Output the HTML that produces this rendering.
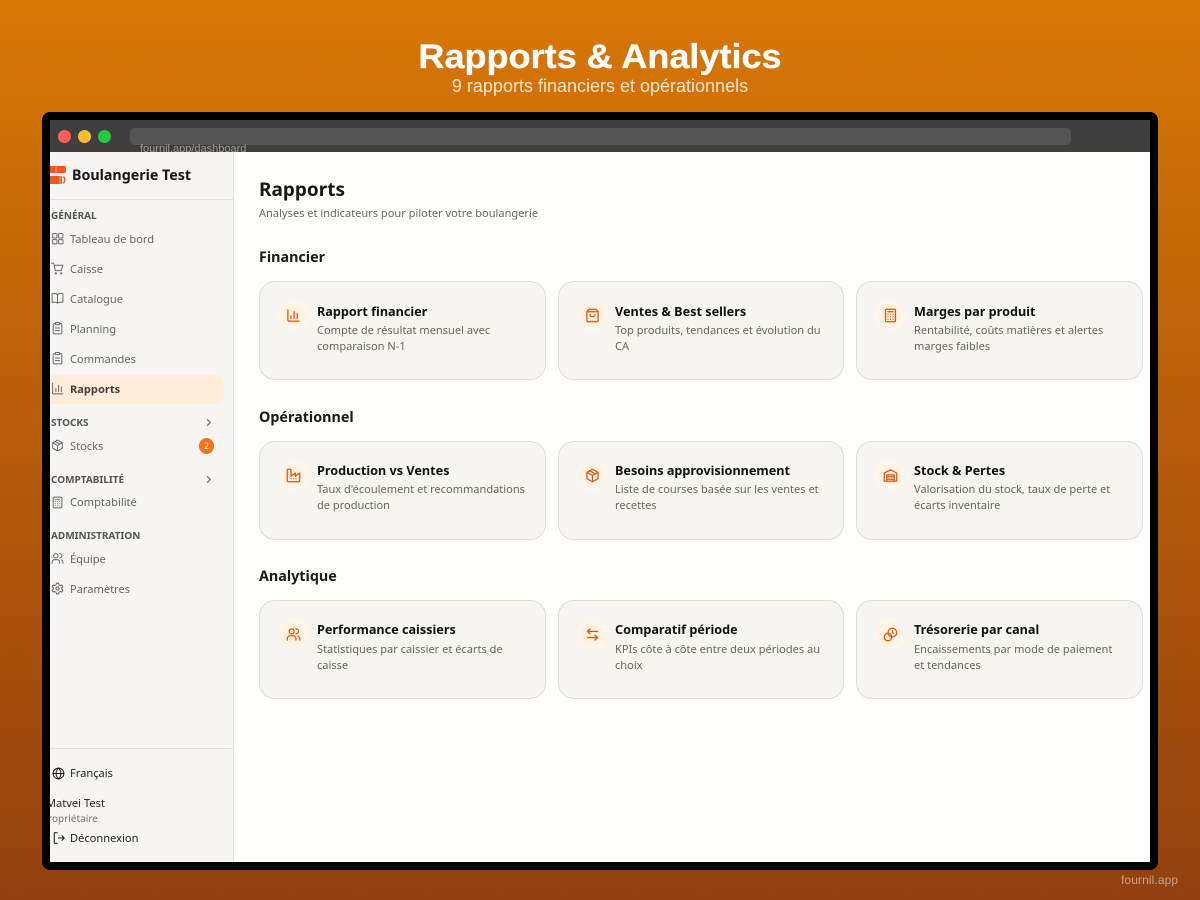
<!DOCTYPE html>
<html lang="fr"><head><meta charset="utf-8"><title>Rapports</title>
<style>
*{box-sizing:border-box;margin:0;padding:0}
html,body{width:1200px;height:900px;overflow:hidden}
body{position:relative;background:linear-gradient(180deg,#d97706,#92400e);font-family:"Noto Sans","Noto Sans CJK SC","Liberation Sans",sans-serif;color:#111}
.a{position:absolute;white-space:nowrap}
.h1{left:0;width:1200px;top:36px;text-align:center;font:700 34px/42px "Liberation Sans",sans-serif;transform:scaleX(1.06);-webkit-text-stroke:.3px #fff;color:#fff}
.h2{left:0;width:1200px;top:74px;text-align:center;font:400 18px/24px "Liberation Sans",sans-serif;color:rgba(255,255,255,.82)}
.wm{left:1121px;top:872px;font:400 12px/16px "Liberation Sans",sans-serif;letter-spacing:.1px;color:rgba(255,255,255,.5)}
.frame{left:42px;top:112px;width:1116px;height:758px;background:#000;border-radius:8px}
.bar{left:50px;top:120px;width:1100px;height:32px;background:#3f3f3f;overflow:hidden}
.dot{position:absolute;width:13px;height:13px;border-radius:50%;top:10px}
.url{left:130px;top:128px;width:941px;height:17px;background:#555;border-radius:5px}
.urlt{left:140px;top:142px;font:400 11px/14px "Liberation Sans",sans-serif;color:#9a9a9a;height:10px;overflow:hidden}
.app{left:50px;top:152px;width:1100px;height:710px;background:#fefefc;overflow:hidden}
.side{position:absolute;left:0;top:0;width:184px;height:710px;background:#f6f5f3;border-right:1px solid #e2e1dd}
.hr{position:absolute;left:0;width:183px;height:1px;background:#e2e1dd}
.brand{left:22px;top:14px;font-size:14.25px;font-weight:700;line-height:20px;color:#171717}
.sec{left:1px;font-size:10px;font-weight:700;line-height:14px;color:#57534e}
.nav{left:20px;font-size:11.1px;line-height:16px;color:#6b6560}
.ni{position:absolute;left:1px;width:13px;height:13px;fill:none;stroke:#6b6560;stroke-width:1.8;stroke-linecap:round;stroke-linejoin:round}
.act{position:absolute;left:-10px;top:223px;width:184px;height:29px;background:#ffedd9;border-radius:10px}
.ch{position:absolute;left:154px;width:9px;height:9px;fill:none;stroke:#78716c;stroke-width:1.4}
.badge{left:149px;top:286px;width:15px;height:16px;border-radius:50%;background:#f97316;color:#fff;font-size:9px;line-height:16px;text-align:center}
.t1{left:209px;top:24px;font-size:19px;font-weight:700;line-height:26px;color:#171717}
.t2{left:209px;top:54px;font-size:11.05px;line-height:16px;color:#6b6560}
.s{left:209px;font-size:14.35px;font-weight:700;line-height:20px;color:#1c1917}
.card{position:absolute;width:287px;height:99px;background:#f6f5f2;border:1px solid #dddcd7;border-radius:16px}
.ic{position:absolute;left:17px;top:17px;width:32px;height:32px;border-radius:50%;background:radial-gradient(circle,#ffedd5 0,#fff5ea 60%,rgba(255,247,237,0) 100%)}
.ic svg{position:absolute;left:8.500px;top:8.500px;width:15px;height:15px;fill:none;stroke:#dc5510;stroke-width:2;stroke-linecap:round;stroke-linejoin:round}
.ct{position:absolute;left:57px;top:19px;font-size:12.65px;font-weight:700;line-height:20px;color:#111;white-space:nowrap}
.cd{position:absolute;left:57px;top:41px;width:210px;font-size:11.05px;line-height:16px;color:#6b6560;white-space:normal}
.c2 .ct,.c2 .cd{left:56px}
.r2 .ct{top:18px}.r2 .cd{top:40px}
.r3 .ct{top:18px}
</style></head><body>
<div class="a h1">Rapports &amp; Analytics</div>
<div class="a h2">9 rapports financiers et opérationnels</div>
<div class="a wm">fournil.app</div>
<div class="a frame"></div>
<div class="a bar">
<span class="dot" style="left:8px;background:#ff5f57"></span>
<span class="dot" style="left:28px;background:#febc2e"></span>
<span class="dot" style="left:48px;background:#28c840"></span>
</div>
<div class="a url"></div>
<div class="a urlt">fournil.app/dashboard</div>
<div class="a app">
<div class="side">
<svg style="position:absolute;left:0;top:14px" width="17" height="19" viewBox="0 0 17 19"><rect x="-3" y="0" width="19" height="7" rx="1.500" fill="#ea5a20"/><rect x="-3" y="10" width="15" height="8" rx="1.500" fill="#ea5a20"/><path d="M6 0v7M10 10v8" stroke="#f6a47f" stroke-width="1"/><path d="M13.500 10.500q2.500 3 0 7" fill="none" stroke="#ea5a20" stroke-width="1.500"/></svg>
<div class="a brand">Boulangerie Test</div>
<div class="hr" style="top:47px"></div>
<div class="a sec" style="top:56px">GÉNÉRAL</div>
<div class="act"></div>
<svg class="ni" style="top:80px" viewBox="0 0 24 24"><rect x="3" y="3" width="8" height="8" rx="1"/><rect x="14" y="3" width="8" height="8" rx="1"/><rect x="3" y="14" width="8" height="8" rx="1"/><rect x="14" y="14" width="8" height="8" rx="1"/></svg>
<div class="a nav" style="top:80px">Tableau de bord</div>
<svg class="ni" style="top:110px" viewBox="0 0 24 24"><path d="M1 2h4l3 14h11l3-10H6"/><circle cx="9" cy="21" r="1.200"/><circle cx="19" cy="21" r="1.200"/></svg>
<div class="a nav" style="top:110px">Caisse</div>
<svg class="ni" style="top:140px" viewBox="0 0 24 24"><path d="M12 6v15M12 6a4 4 0 0 0-4-3H2v16h7a3 3 0 0 1 3 2 3 3 0 0 1 3-2h7V3h-6a4 4 0 0 0-4 3z"/></svg>
<div class="a nav" style="top:140px">Catalogue</div>
<svg class="ni" style="top:170px" viewBox="0 0 24 24"><rect x="8" y="1" width="8" height="4" rx="1"/><path d="M16 3h2a2 2 0 0 1 2 2v15a2 2 0 0 1-2 2H6a2 2 0 0 1-2-2V5a2 2 0 0 1 2-2h2M8 11h8M8 16h8"/></svg>
<div class="a nav" style="top:170px">Planning</div>
<svg class="ni" style="top:200px" viewBox="0 0 24 24"><rect x="8" y="1" width="8" height="4" rx="1"/><path d="M16 3h2a2 2 0 0 1 2 2v15a2 2 0 0 1-2 2H6a2 2 0 0 1-2-2V5a2 2 0 0 1 2-2h2M8 11h8M8 16h8"/></svg>
<div class="a nav" style="top:200px">Commandes</div>
<svg class="ni" style="top:230px" viewBox="0 0 24 24"><path d="M3 2v18a2 2 0 0 0 2 2h17M9 18v-6M14 18V6M19 18v-9"/></svg>
<div class="a nav" style="top:230px;font-weight:700;color:#44403c">Rapports</div>
<div class="a sec" style="top:263px">STOCKS</div>
<svg class="ch" style="top:266px" viewBox="0 0 10 10"><path d="M3.500 1.500 7 5l-3.500 3.500"/></svg>
<svg class="ni" style="top:287px" viewBox="0 0 24 24"><path d="M12 2 3 7v10l9 5 9-5V7zM3 7l9 5 9-5M12 12v10M7.500 4.500l9 5"/></svg>
<div class="a nav" style="top:287px">Stocks</div>
<div class="a badge">2</div>
<div class="a sec" style="top:320px">COMPTABILITÉ</div>
<svg class="ch" style="top:323px" viewBox="0 0 10 10"><path d="M3.500 1.500 7 5l-3.500 3.500"/></svg>
<svg class="ni" style="top:344px" viewBox="0 0 24 24"><rect x="4" y="2" width="16" height="20" rx="2"/><path d="M8 6h8M8 10h.01M12 10h.01M16 10h.01M8 14h.01M12 14h.01M16 14h.01M8 18h.01M12 18h.01M16 18h.01"/></svg>
<div class="a nav" style="top:343px">Comptabilité</div>
<div class="a sec" style="top:376px">ADMINISTRATION</div>
<svg class="ni" style="top:400px" viewBox="0 0 24 24"><circle cx="9" cy="7" r="4"/><path d="M2 21v-2a5 5 0 0 1 5-5h4a5 5 0 0 1 5 5v2M16 3a4 4 0 0 1 0 8M22 21v-2a5 5 0 0 0-3-4.500"/></svg>
<div class="a nav" style="top:400px">Équipe</div>
<svg class="ni" style="top:430px" viewBox="0 0 24 24"><circle cx="12" cy="12" r="3"/><path d="M10 2h4l.6 3 2.600 1.500 2.900-1 2 3.400-2.300 2v2.200l2.300 2-2 3.400-2.900-1-2.600 1.500L14 22h-4l-.6-3-2.600-1.500-2.900 1-2-3.400 2.300-2v-2.200l-2.300-2 2-3.400 2.900 1L9.400 5z"/></svg>
<div class="a nav" style="top:430px">Paramètres</div>
<div class="hr" style="top:596px"></div>
<svg class="ni" style="top:615px;left:2px;stroke:#1c1917;width:13px;height:13px" viewBox="0 0 24 24"><circle cx="12" cy="12" r="10"/><path d="M2 12h20M12 2c-6 6-6 14 0 20M12 2c6 6 6 14 0 20"/></svg>
<div class="a nav" style="top:614px;color:#292524">Français</div>
<div class="a nav" style="top:644px;left:-4px;color:#292524">Matvei Test</div>
<div class="a" style="top:659px;left:-8px;font-size:10px;line-height:14px;color:#78716c">Propriétaire</div>
<svg class="ni" style="top:679px;left:2px;stroke:#1c1917;width:14px;height:14px" viewBox="0 0 24 24"><path d="M9 3H4v18h5M11 12h10M17 8l4 4-4 4"/></svg>
<div class="a nav" style="top:679px;color:#292524">Déconnexion</div>
</div>

<div class="a t1">Rapports</div>
<div class="a t2">Analyses et indicateurs pour piloter votre boulangerie</div>

<div class="a s" style="top:96px">Financier</div>
<div class="card" style="left:209px;top:129px"><div class="ic"><svg viewBox="0 0 24 24"><path d="M3 3v16a2 2 0 0 0 2 2h16M8 17v-4M13 17V6M18 17V9"/></svg></div><div class="ct">Rapport financier</div><div class="cd">Compte de résultat mensuel avec comparaison N-1</div></div>
<div class="card c2" style="left:508px;top:129px;width:286px"><div class="ic"><svg viewBox="0 0 24 24"><path d="M6 2 3 6v14a2 2 0 0 0 2 2h14a2 2 0 0 0 2-2V6l-3-4zM3 6h18M16 10a4 4 0 0 1-8 0"/></svg></div><div class="ct">Ventes &amp; Best sellers</div><div class="cd">Top produits, tendances et évolution du CA</div></div>
<div class="card" style="left:806px;top:129px"><div class="ic"><svg viewBox="0 0 24 24"><rect x="4" y="2" width="16" height="20" rx="2"/><path d="M8 6h8M8 10h.01M12 10h.01M16 10h.01M8 14h.01M12 14h.01M16 14h.01M8 18h.01M12 18h.01M16 18h.01"/></svg></div><div class="ct">Marges par produit</div><div class="cd">Rentabilité, coûts matières et alertes marges faibles</div></div>

<div class="a s" style="top:256px">Opérationnel</div>
<div class="card r2" style="left:209px;top:289px"><div class="ic"><svg viewBox="0 0 24 24"><path d="M2 20a2 2 0 0 0 2 2h16a2 2 0 0 0 2-2V8l-7 5V8l-7 5V4a2 2 0 0 0-2-2H4a2 2 0 0 0-2 2zM8 17h.01M12 17h.01M16 17h.01"/></svg></div><div class="ct">Production vs Ventes</div><div class="cd">Taux d'écoulement et recommandations de production</div></div>
<div class="card r2 c2" style="left:508px;top:289px;width:286px"><div class="ic"><svg viewBox="0 0 24 24"><path d="M12 2 3 7v10l9 5 9-5V7zM3 7l9 5 9-5M12 12v10M7.500 4.500l9 5"/></svg></div><div class="ct">Besoins approvisionnement</div><div class="cd">Liste de courses basée sur les ventes et recettes</div></div>
<div class="card r2" style="left:806px;top:289px"><div class="ic"><svg viewBox="0 0 24 24"><path d="M2 21V8l10-5 10 5v13zM6 21V11h12v10M6 14h12M6 18h12"/></svg></div><div class="ct">Stock &amp; Pertes</div><div class="cd">Valorisation du stock, taux de perte et écarts inventaire</div></div>

<div class="a s" style="top:415px">Analytique</div>
<div class="card r3" style="left:209px;top:448px"><div class="ic"><svg viewBox="0 0 24 24"><circle cx="9" cy="7" r="4"/><path d="M2 21v-2a5 5 0 0 1 5-5h4a5 5 0 0 1 5 5v2M16 3a4 4 0 0 1 0 8M22 21v-2a5 5 0 0 0-3-4.500"/></svg></div><div class="ct">Performance caissiers</div><div class="cd">Statistiques par caissier et écarts de caisse</div></div>
<div class="card r3 c2" style="left:508px;top:448px;width:286px"><div class="ic"><svg viewBox="0 0 24 24"><path d="M8 3 4 7l4 4M4 7h16M16 13l4 4-4 4M20 17H4"/></svg></div><div class="ct">Comparatif période</div><div class="cd">KPIs côte à côte entre deux périodes au choix</div></div>
<div class="card r3" style="left:806px;top:448px"><div class="ic"><svg viewBox="0 0 24 24"><circle cx="15" cy="9" r="7"/><circle cx="8" cy="16" r="6"/><path d="M15 6v3l2 1"/></svg></div><div class="ct">Trésorerie par canal</div><div class="cd">Encaissements par mode de paiement et tendances</div></div>
</div>
</body></html>
